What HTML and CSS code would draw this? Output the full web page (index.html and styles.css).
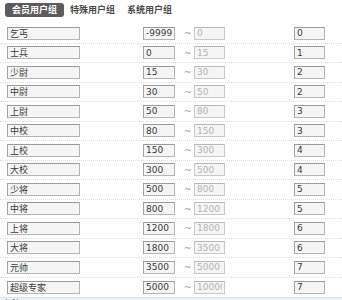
FILE: index.html
```html
<!DOCTYPE html>
<html>
<head>
  <title>用户组</title>
  <meta charset="UTF-8"/>
  <link rel="stylesheet" href="styles.css">
</head>
<body>

  <div class="tabs">
    <span class="tab active">会员用户组</span>
    <span class="tab">特殊用户组</span>
    <span class="tab">系统用户组</span>
  </div>

  <div class="group-list">
    <div class="group-row">
      <span></span>
      <input class="name" value="乞丐">
      <span></span>
      <input class="min" value="-999999">
      <span class="tilde">~</span>
      <input class="max" value="0" disabled>
      <span></span>
      <input class="level" value="0">
    </div>
    <div class="group-row">
      <span></span>
      <input class="name" value="士兵">
      <span></span>
      <input class="min" value="0">
      <span class="tilde">~</span>
      <input class="max" value="15" disabled>
      <span></span>
      <input class="level" value="1">
    </div>
    <div class="group-row">
      <span></span>
      <input class="name" value="少尉">
      <span></span>
      <input class="min" value="15">
      <span class="tilde">~</span>
      <input class="max" value="30" disabled>
      <span></span>
      <input class="level" value="2">
    </div>
    <div class="group-row">
      <span></span>
      <input class="name" value="中尉">
      <span></span>
      <input class="min" value="30">
      <span class="tilde">~</span>
      <input class="max" value="50" disabled>
      <span></span>
      <input class="level" value="2">
    </div>
    <div class="group-row">
      <span></span>
      <input class="name" value="上尉">
      <span></span>
      <input class="min" value="50">
      <span class="tilde">~</span>
      <input class="max" value="80" disabled>
      <span></span>
      <input class="level" value="3">
    </div>
    <div class="group-row">
      <span></span>
      <input class="name" value="中校">
      <span></span>
      <input class="min" value="80">
      <span class="tilde">~</span>
      <input class="max" value="150" disabled>
      <span></span>
      <input class="level" value="3">
    </div>
    <div class="group-row">
      <span></span>
      <input class="name" value="上校">
      <span></span>
      <input class="min" value="150">
      <span class="tilde">~</span>
      <input class="max" value="300" disabled>
      <span></span>
      <input class="level" value="4">
    </div>
    <div class="group-row">
      <span></span>
      <input class="name" value="大校">
      <span></span>
      <input class="min" value="300">
      <span class="tilde">~</span>
      <input class="max" value="500" disabled>
      <span></span>
      <input class="level" value="4">
    </div>
    <div class="group-row">
      <span></span>
      <input class="name" value="少将">
      <span></span>
      <input class="min" value="500">
      <span class="tilde">~</span>
      <input class="max" value="800" disabled>
      <span></span>
      <input class="level" value="5">
    </div>
    <div class="group-row">
      <span></span>
      <input class="name" value="中将">
      <span></span>
      <input class="min" value="800">
      <span class="tilde">~</span>
      <input class="max" value="1200" disabled>
      <span></span>
      <input class="level" value="5">
    </div>
    <div class="group-row">
      <span></span>
      <input class="name" value="上将">
      <span></span>
      <input class="min" value="1200">
      <span class="tilde">~</span>
      <input class="max" value="1800" disabled>
      <span></span>
      <input class="level" value="6">
    </div>
    <div class="group-row">
      <span></span>
      <input class="name" value="大将">
      <span></span>
      <input class="min" value="1800">
      <span class="tilde">~</span>
      <input class="max" value="3500" disabled>
      <span></span>
      <input class="level" value="6">
    </div>
    <div class="group-row">
      <span></span>
      <input class="name" value="元帅">
      <span></span>
      <input class="min" value="3500">
      <span class="tilde">~</span>
      <input class="max" value="5000" disabled>
      <span></span>
      <input class="level" value="7">
    </div>
    <div class="group-row">
      <span></span>
      <input class="name" value="超级专家">
      <span></span>
      <input class="min" value="5000">
      <span class="tilde">~</span>
      <input class="max" value="10000" disabled>
      <span></span>
      <input class="level" value="7">
    </div>
  </div>

  <div class="footer-bar">备注</div>

</body>
</html>
```

FILE: styles.css
```css
body {
  margin: 0;
  background-color: #fff;
  color: #333;
  font-family: "DejaVu Sans", "Noto Sans CJK SC", sans-serif;
  font-size: 9px;
}

.tabs {
  display: flex;
  padding: 3px 0 0 5px;
  height: 14px;
  margin-bottom: 7px;
}

.tab {
  padding: 0 6px;
  line-height: 14px;
  font-weight: bold;
  color: #4a4a4a;
  font-family: "Noto Sans CJK SC", sans-serif;
}

.tab.active {
  padding: 0 7px;
  background-color: #5c5c5c;
  color: #fff;
  border-radius: 3px;
}

.group-row {
  display: grid;
  grid-template-columns: 7px 73px 63px 32px 19px 31px 69px 31px;
  align-items: center;
  height: 19.5px;
  box-sizing: border-box;
  border-bottom: 1px dotted #dcdcdc;
}

.group-row:last-child {
  border-bottom: none;
}

.group-row input {
  box-sizing: border-box;
  width: 100%;
  height: 13px;
  margin: 0;
  padding: 0 2px;
  border: 1px solid #b4b4b4;
  border-top-color: #9a9a9a;
  border-left-color: #a2a2a2;
  background-color: #f5f5f5;
  color: #3a3a3a;
  font-family: "DejaVu Sans", "Noto Sans CJK SC", sans-serif;
  font-size: 9px;
}

.group-row input.max {
  border-color: #c8c8c8;
  border-top-color: #b8b8b8;
  color: #b4b4b4;
}

.tilde {
  padding-left: 9px;
  color: #999;
}

.footer-bar {
  height: 20px;
  background-color: #e6f2fb;
  border-top: 1px solid #d2e5f3;
  padding-left: 3px;
  line-height: 12px;
  color: #555;
}
```
